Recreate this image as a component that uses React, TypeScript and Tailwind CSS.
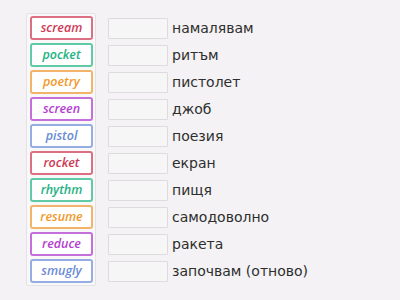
import React from 'react'

const tiles = [
  { word: 'scream', color: 'text-[#cf3a55] border-[#dc6f82]' },
  { word: 'pocket', color: 'text-[#25b283] border-[#5fcaa5]' },
  { word: 'poetry', color: 'text-[#ef9a2e] border-[#f2b36a]' },
  { word: 'screen', color: 'text-[#b33fcf] border-[#c46fda]' },
  { word: 'pistol', color: 'text-[#6a8bd6] border-[#95ade2]' },
  { word: 'rocket', color: 'text-[#cf3a55] border-[#dc6f82]' },
  { word: 'rhythm', color: 'text-[#25b283] border-[#5fcaa5]' },
  { word: 'resume', color: 'text-[#ef9a2e] border-[#f2b36a]' },
  { word: 'reduce', color: 'text-[#b33fcf] border-[#c46fda]' },
  { word: 'smugly', color: 'text-[#6a8bd6] border-[#95ade2]' },
]

const meanings = [
  'намалявам',
  'ритъм',
  'пистолет',
  'джоб',
  'поезия',
  'екран',
  'пищя',
  'самодоволно',
  'ракета',
  'започвам (отново)',
]

const App: React.FC = () => {
  return (
    <div className="w-[400px] h-[300px] bg-[#f4f2f4] pt-[13px] pl-[26px] flex gap-[12px] overflow-hidden">
      {/* Tile bank */}
      <div className="w-[70px] h-[273px] bg-[#f9f8f9] border border-[#e4e2e4] rounded-[2px] pt-[2px] pl-[3px] pr-[2px] flex flex-col gap-[3px]">
        {tiles.map((t, i) => (
          <div
            key={i}
            className={`h-[24px] bg-white border-2 rounded-[3px] flex items-center justify-center italic font-semibold text-[12.5px] font-['Open_Sans',sans-serif] ${t.color}`}
          >
            {t.word}
          </div>
        ))}
      </div>

      {/* Targets */}
      <div className="pt-[3px] flex flex-col gap-[3px]">
        {meanings.map((m, i) => (
          <div key={i} className="h-[24px] flex items-center gap-[4px]">
            <div className="w-[60px] h-[21px] bg-[#f7f6f7] border border-[#dddbdd] rounded-[1px]" />
            <span className="text-[14px] text-[#2e2e2e] leading-none font-['DejaVu_Sans',sans-serif]">
              {m}
            </span>
          </div>
        ))}
      </div>
    </div>
  )
}

export default App
